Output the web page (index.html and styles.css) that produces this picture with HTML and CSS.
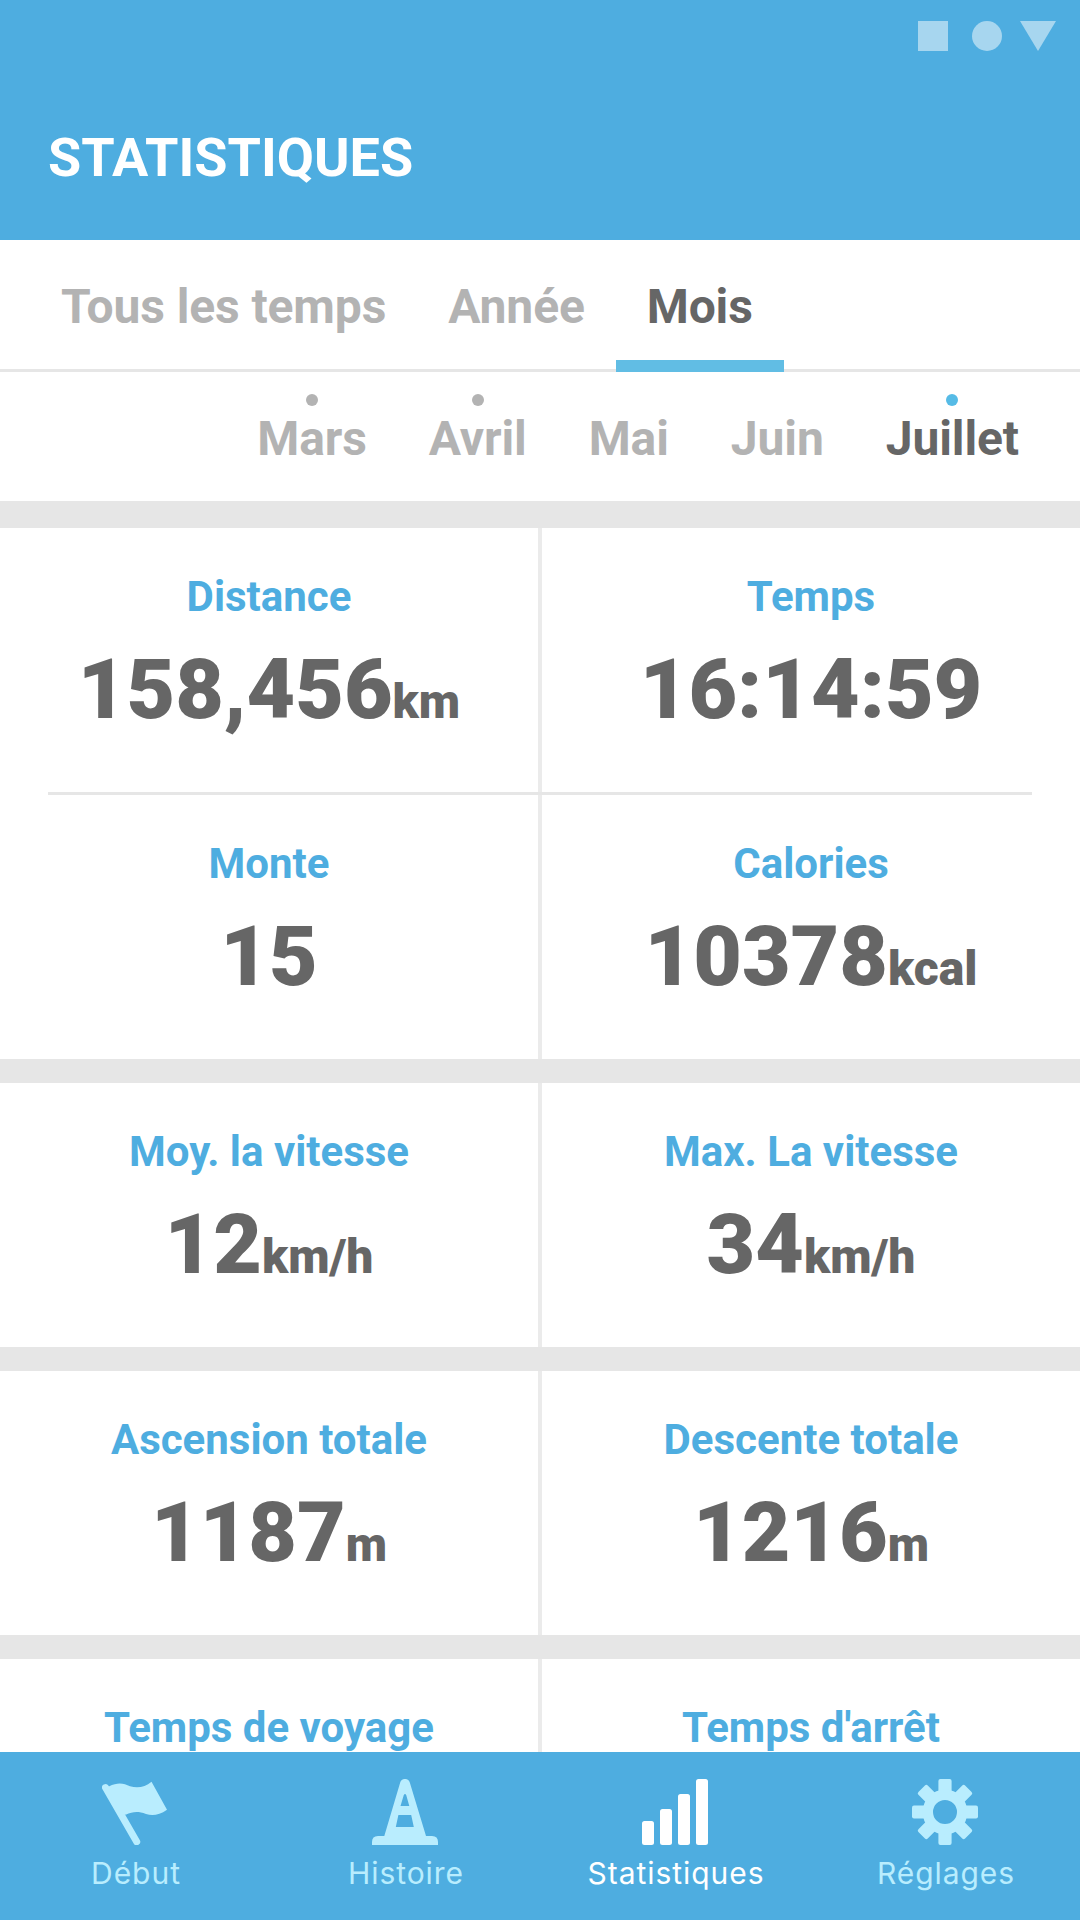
FILE: index.html
```html
<!DOCTYPE html>
<html lang="fr">
<head>
    <meta charset="UTF-8">
    <meta name="viewport" content="width=device-width, initial-scale=1.0">
    <title>Statistiques</title>
    <link rel="stylesheet" href="styles.css">
</head>
<body>

<!-- Header -->
<header class="header">
    <div class="status-bar">
        <svg width="138" height="30" viewBox="0 0 138 30">
            <rect width="30" height="30"/>
            <circle cx="69" cy="15" r="15"/>
            <path d="M102 0h36l-18 30z"/>
        </svg>
    </div>
    <h1>STATISTIQUES</h1>
</header>

<!-- Period tabs -->
<nav class="tabs">
    <div class="tab">Tous les temps</div>
    <div class="tab">Année</div>
    <div class="tab active">Mois</div>
</nav>

<!-- Months -->
<div class="months">
    <div class="month has-data">Mars</div>
    <div class="month has-data">Avril</div>
    <div class="month">Mai</div>
    <div class="month">Juin</div>
    <div class="month has-data active">Juillet</div>
</div>

<!-- Stats -->
<main class="stats">
    <section class="group">
        <div class="row">
            <div class="cell"><h2>Distance</h2><p>158,456<span>km</span></p></div>
            <div class="cell"><h2>Temps</h2><p>16:14:59</p></div>
        </div>
        <hr class="divider">
        <div class="row">
            <div class="cell"><h2>Monte</h2><p>15</p></div>
            <div class="cell"><h2>Calories</h2><p>10378<span>kcal</span></p></div>
        </div>
    </section>
    <section class="group">
        <div class="row">
            <div class="cell"><h2>Moy. la vitesse</h2><p>12<span>km/h</span></p></div>
            <div class="cell"><h2>Max. La vitesse</h2><p>34<span>km/h</span></p></div>
        </div>
    </section>
    <section class="group">
        <div class="row">
            <div class="cell"><h2>Ascension totale</h2><p>1187<span>m</span></p></div>
            <div class="cell"><h2>Descente totale</h2><p>1216<span>m</span></p></div>
        </div>
    </section>
    <section class="group">
        <div class="row">
            <div class="cell"><h2>Temps de voyage</h2></div>
            <div class="cell"><h2>Temps d'arrêt</h2></div>
        </div>
    </section>
</main>

<!-- Bottom navigation -->
<nav class="bottom-nav">
    <div class="nav-item">
        <svg width="66" height="66" viewBox="0 0 66 66">
            <path d="M3.5 8.6 34.7 62.7" fill="none" stroke="currentColor" stroke-width="7" stroke-linecap="round"/>
            <path d="M3.5 9 6.8 7.6C17 2.5 22 5 28 7.2C36 9.5 43 8 49.5 2.7L65 30.7C57 36.5 50 37 44 35C36 32 31 32.5 23.7 35.7L17 32z"/>
        </svg>
        <span>Début</span>
    </div>
    <div class="nav-item">
        <svg width="66" height="66" viewBox="0 0 66 66">
            <path fill-rule="evenodd" d="M28.2 3.5C29.5-1.2 36.5-1.2 37.8 3.5L54 57H60Q66 57 66 63V66H0V63Q0 57 6 57H12.3zM31.8 16 28.5 27H37.3L34.2 16Q33 14 31.8 16zM26.4 36 23.8 48H41.8L39.2 36z"/>
        </svg>
        <span>Histoire</span>
    </div>
    <div class="nav-item active">
        <svg width="66" height="66" viewBox="0 0 66 66">
            <rect x="0" y="42" width="12" height="24" rx="2.5"/>
            <rect x="18" y="30" width="12" height="36" rx="2.5"/>
            <rect x="36" y="15" width="12" height="51" rx="2.5"/>
            <rect x="54" y="0" width="12" height="66" rx="2.5"/>
        </svg>
        <span>Statistiques</span>
    </div>
    <div class="nav-item">
        <svg width="66" height="66" viewBox="-33 -33 66 66">
            <g>
                <rect x="-6.6" y="-33" width="13.2" height="16" rx="2"/>
                <rect x="-6.6" y="-33" width="13.2" height="16" rx="2" transform="rotate(45)"/>
                <rect x="-6.6" y="-33" width="13.2" height="16" rx="2" transform="rotate(90)"/>
                <rect x="-6.6" y="-33" width="13.2" height="16" rx="2" transform="rotate(135)"/>
                <rect x="-6.6" y="-33" width="13.2" height="16" rx="2" transform="rotate(180)"/>
                <rect x="-6.6" y="-33" width="13.2" height="16" rx="2" transform="rotate(225)"/>
                <rect x="-6.6" y="-33" width="13.2" height="16" rx="2" transform="rotate(270)"/>
                <rect x="-6.6" y="-33" width="13.2" height="16" rx="2" transform="rotate(315)"/>
            </g>
            <circle r="17.2" fill="none" stroke="currentColor" stroke-width="10.4"/>
        </svg>
        <span>Réglages</span>
    </div>
</nav>

</body>
</html>
```

FILE: styles.css
```css
* {
    box-sizing: border-box;
}

body {
    margin: 0;
    width: 1080px;
    height: 1920px;
    display: flex;
    flex-direction: column;
    overflow: hidden;
    background-color: #fff;
    font-family: Roboto, sans-serif;
    color: #666;
}

h1, h2, p {
    margin: 0;
}

svg {
    display: block;
    fill: currentColor;
}

/* Header */
.header {
    flex: none;
    height: 240px;
    background-color: #4eade0;
    color: #fff;
}

.status-bar {
    display: flex;
    justify-content: flex-end;
    padding: 21px 24px 0;
    color: #a7d6ef;
}

.header h1 {
    padding: 75px 48px 0;
    font-size: 54px;
    line-height: 64px;
    font-weight: 700;
}

/* Period tabs */
.tabs {
    flex: none;
    display: flex;
    height: 132px;
    padding-left: 30px;
    border-bottom: 3px solid #e6e6e6;
    font-size: 48px;
    line-height: 56px;
    font-weight: 700;
    color: #b3b3b3;
}

.tab {
    height: 132px;
    padding: 39px 31px 0;
    letter-spacing: -0.12px;
}

.tab.active {
    color: #666;
    border-bottom: 12px solid #61bde4;
}

/* Months */
.months {
    flex: none;
    display: flex;
    justify-content: flex-end;
    gap: 62px;
    height: 129px;
    padding: 22px 61px 0 0;
    font-size: 48px;
    line-height: 56px;
    font-weight: 700;
    letter-spacing: -0.1px;
    color: #b3b3b3;
}

.month::before {
    content: "";
    display: block;
    width: 12px;
    height: 12px;
    margin: 0 auto 5px;
    border-radius: 50%;
}

.month.has-data::before {
    background-color: #b3b3b3;
}

.month.active {
    color: #666;
}

.month.active::before {
    background-color: #56bbe6;
}

/* Stats */
.stats {
    flex: 1;
    min-height: 0;
    overflow: hidden;
    border-top: 3px solid #e6e6e6;
}

.group {
    border-top: 24px solid #e6e6e6;
}

.row {
    display: flex;
    height: 264px;
}

.divider {
    margin: 0 48px;
    height: 3px;
    border: none;
    background-color: #e6e6e6;
}

.cell {
    width: 538px;
    padding-top: 44px;
    text-align: center;
}

.cell:first-child {
    width: 542px;
    border-right: 4px solid #ebebeb;
}

.cell h2 {
    font-size: 42px;
    line-height: 50px;
    font-weight: 700;
    color: #4eade0;
}

.cell p {
    margin-top: 19px;
    font-size: 84px;
    line-height: 98px;
    font-weight: 900;
}

.cell p span {
    font-size: 48px;
}

/* Bottom navigation */
.bottom-nav {
    flex: none;
    display: flex;
    height: 168px;
    background-color: #4eade0;
    color: #b9edfe;
    font-family: Inter, sans-serif;
    font-size: 30px;
    line-height: 36px;
    letter-spacing: 0.95px;
}

.nav-item {
    flex: 1;
    display: flex;
    flex-direction: column;
    align-items: center;
    padding-top: 27px;
}

.nav-item span {
    margin-top: 10px;
    padding-left: 2px;
}

.nav-item.active {
    color: #fff;
}
```
